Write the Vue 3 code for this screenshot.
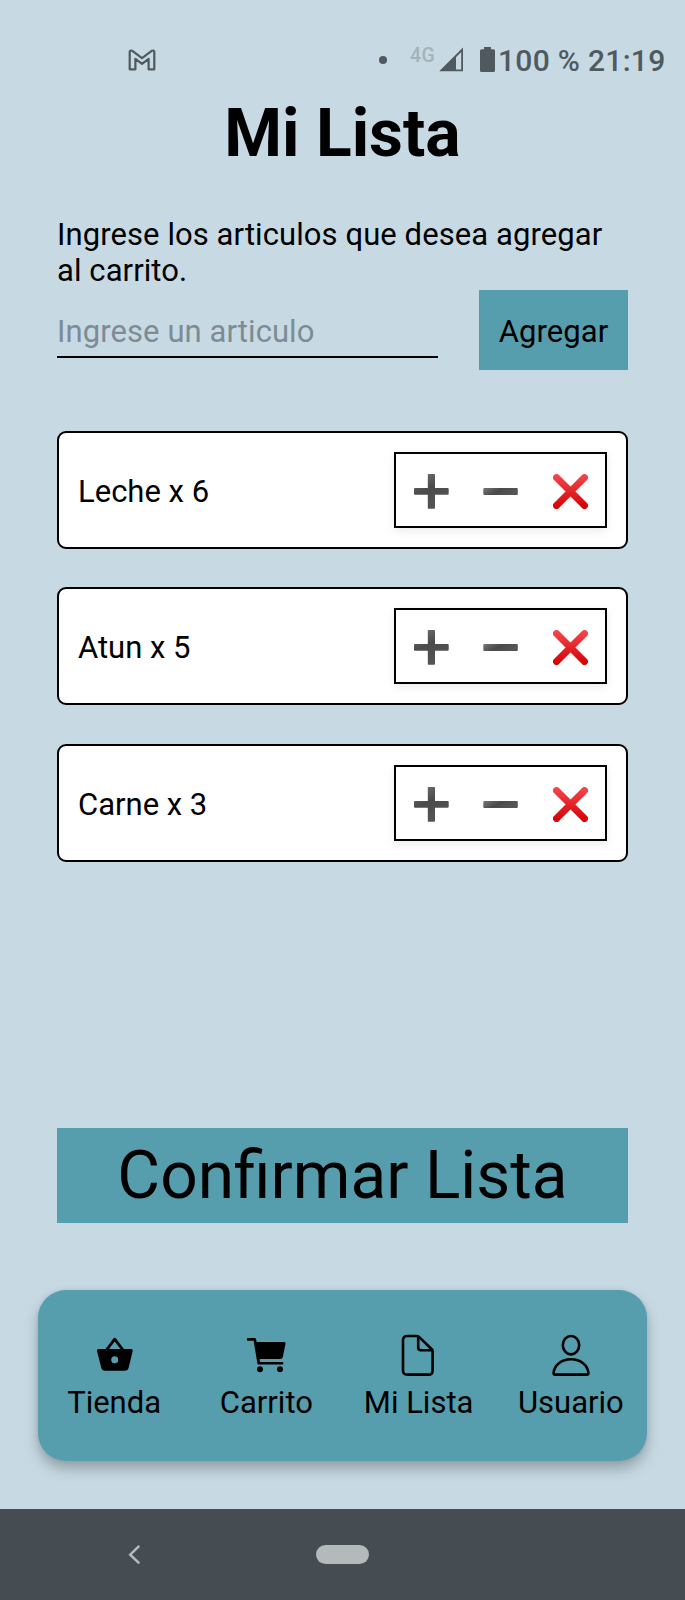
<script setup>
import { reactive, ref } from 'vue'

const draft = ref('')
const items = reactive([
  { name: 'Leche', qty: 6 },
  { name: 'Atun', qty: 5 },
  { name: 'Carne', qty: 3 },
])

function addItem() {
  const name = draft.value.trim()
  if (!name) return
  items.push({ name, qty: 1 })
  draft.value = ''
}

function decrease(item) {
  if (item.qty > 1) item.qty -= 1
}
</script>

<template>
  <div class="screen">
    <svg class="defs" width="0" height="0" aria-hidden="true">
      <defs>
        <linearGradient id="grey-v" x1="0" y1="0" x2="0.5" y2="1">
          <stop offset="0" stop-color="#757575" />
          <stop offset="0.5" stop-color="#4b4b4b" />
          <stop offset="1" stop-color="#555" />
        </linearGradient>
        <linearGradient id="grey-h" x1="0" y1="0" x2="1" y2="0.3">
          <stop offset="0" stop-color="#777" />
          <stop offset="0.5" stop-color="#4a4a4a" />
          <stop offset="1" stop-color="#555" />
        </linearGradient>
        <linearGradient id="red" x1="0" y1="0" x2="0" y2="35" gradientUnits="userSpaceOnUse">
          <stop offset="0" stop-color="#f8474c" />
          <stop offset="0.5" stop-color="#e32428" />
          <stop offset="1" stop-color="#d40000" />
        </linearGradient>
      </defs>
    </svg>

    <header class="status">
      <svg class="gmail" width="28" height="22" viewBox="0 0 28 22">
        <path d="M4 1.7 14 9.2 24 1.7Q26.300 1 26.300 3V20.300H20.600V9.800L14 14.800 7.400 9.800V20.300H1.700V3Q1.700 1 4 1.700Z" />
      </svg>
      <span class="dot"></span>
      <span class="network">4G</span>
      <svg class="signal" width="25" height="25" viewBox="0 0 25 25">
        <path fill-rule="evenodd" d="M24 .5V24.300H.2ZM22.200 5 17 10.200V22.400H22.200Z" />
      </svg>
      <svg class="battery" width="15" height="25" viewBox="0 0 15 25">
        <path d="M4 0H11V2.300H13.500Q15 2.300 15 3.800V23.500Q15 25 13.500 25H1.500Q0 25 0 23.500V3.800Q0 2.300 1.500 2.300H4Z" />
      </svg>
      <span class="clock">100 % 21:19</span>
    </header>

    <main class="content">
      <h1>Mi Lista</h1>
      <p class="hint">Ingrese los articulos que desea agregar al carrito.</p>

      <form class="entry" @submit.prevent="addItem">
        <input v-model="draft" type="text" placeholder="Ingrese un articulo" />
        <button class="add" type="submit">Agregar</button>
      </form>

      <ul class="items">
        <li v-for="(item, i) in items" :key="item.name" class="card">
          <span class="label">{{ item.name }} x {{ item.qty }}</span>
          <div class="actions">
            <button type="button" aria-label="Sumar" @click="item.qty++">
              <svg width="35" height="35" viewBox="0 0 35 35">
                <path fill="url(#grey-v)" d="M14.600 0H20.200Q21 0 21 .8V14H33.700Q34.700 14 34.700 15V19.800Q34.700 20.800 33.700 20.800H21V34Q21 34.800 20.200 34.800H14.600Q13.800 34.800 13.800 34V20.800H1Q0 20.800 0 19.800V15Q0 14 1 14H13.800V.8Q13.800 0 14.600 0Z" />
              </svg>
            </button>
            <button type="button" aria-label="Restar" @click="decrease(item)">
              <svg width="35" height="35" viewBox="0 0 35 35">
                <rect x="0.300" y="14" width="34.500" height="6.900" rx="1" fill="url(#grey-h)" />
              </svg>
            </button>
            <button type="button" aria-label="Quitar" @click="items.splice(i, 1)">
              <svg width="35" height="35" viewBox="0 0 35 35">
                <path d="M3.500 3.500 31.500 31.500M31.500 3.500 3.500 31.500" stroke="url(#red)" stroke-width="6.900" stroke-linecap="round" />
              </svg>
            </button>
          </div>
        </li>
      </ul>

      <button class="confirm" type="button">Confirmar Lista</button>
    </main>

    <nav class="tabs">
      <a class="tab">
        <svg width="44" height="44" viewBox="0 0 44 44">
          <path transform="translate(0.700 0)" fill-rule="evenodd" d="M22 4.800Q22.900 4.800 23.500 5.700L31.300 16H38.500Q40.400 16 40 18L36 34.500Q35.200 37.800 32 37.800H12.500Q9.300 37.800 8.500 34.500L4.300 18Q4 16 5.800 16H12.800L20.500 5.700Q21.100 4.800 22 4.800ZM22 8.400 16.300 16H27.800ZM22 23.300A3.500 3.500 0 1 0 22 30.300 3.500 3.500 0 1 0 22 23.300Z" />
        </svg>
        <span>Tienda</span>
      </a>
      <a class="tab">
        <svg width="44" height="44" viewBox="0 0 44 44">
          <path d="M3.900 5H10.500Q11.800 5 12.100 6.300L12.600 9H40Q41.900 9 41.500 11L38.800 24Q38.400 26 36.500 26H15.600L16 28.900H38.200Q39.400 28.900 39.400 30.200T38.200 31.600H14.500Q13.600 31.600 13.400 30.600L9.600 7.700H3.900Q2.800 7.700 2.800 6.400T3.900 5Z" />
          <circle cx="16" cy="36.300" r="3" />
          <circle cx="36" cy="36.300" r="3" />
        </svg>
        <span>Carrito</span>
      </a>
      <a class="tab">
        <svg class="line" width="44" height="44" viewBox="0 0 44 44">
          <path d="M11 3H19.800Q21.100 3 22 3.900L34.800 16.200Q35.600 17 35.600 18.200V37.400Q35.600 41.600 31.400 41.600H10.200Q6 41.600 6 37.400V7.200Q6 3 10.200 3Z" />
          <path d="M21.200 3.600V14.600Q21.200 17.300 23.900 17.300H35.200" />
        </svg>
        <span>Mi Lista</span>
      </a>
      <a class="tab">
        <svg class="line" width="44" height="44" viewBox="0 0 44 44">
          <ellipse cx="22" cy="12.200" rx="8.200" ry="9.200" />
          <path d="M22 26.300C12.500 26.300 5.200 32 4.600 40Q4.600 41.600 6.100 41.600H37.900Q39.400 41.600 39.400 40C38.800 32 31.500 26.300 22 26.300Z" />
        </svg>
        <span>Usuario</span>
      </a>
    </nav>

    <footer class="system">
      <svg class="back" width="12" height="20" viewBox="0 0 12 20">
        <path d="M10.500 1.700 2.200 9.700 10.500 17.700" />
      </svg>
      <span class="home"></span>
    </footer>
  </div>
</template>

<style>
body {
  margin: 0;
  background: #c7dae4;
}
</style>

<style scoped>
.screen {
  box-sizing: border-box;
  width: 685px;
  height: 1600px;
  display: flex;
  flex-direction: column;
  overflow: hidden;
  background: #c7dae4;
  color: #000;
  font-family: Roboto, sans-serif;
  font-size: 31px;
}

.defs {
  position: absolute;
}

button {
  margin: 0;
  padding: 0;
  border: 0;
  border-radius: 0;
  background: none;
  color: inherit;
  font: inherit;
}

.status {
  flex: none;
  display: flex;
  align-items: flex-start;
  height: 95px;
  box-sizing: border-box;
  padding: 47px 0 0 128px;
  color: #50595e;
  fill: #50595e;
}

.gmail {
  margin-top: 2px;
  fill: none;
  stroke: #50595e;
  stroke-width: 2.200;
  stroke-linejoin: round;
}

.dot {
  width: 8px;
  height: 8px;
  margin: 9px 0 0 223px;
  border-radius: 50%;
  background: #50595e;
}

.network {
  width: 29px;
  margin-left: 23px;
  color: #a3b3bc;
  font-size: 19.500px;
  font-weight: 500;
  line-height: 17px;
  letter-spacing: 0.500px;
}

.battery {
  margin-left: 16px;
}

.clock {
  margin: -4px 0 0 3px;
  font-size: 30px;
  font-weight: 500;
  line-height: 35px;
  letter-spacing: 0.300px;
  white-space: nowrap;
}

.content {
  flex: none;
  display: flex;
  flex-direction: column;
  padding: 0 57px;
}

h1 {
  margin: 0;
  font-size: 66px;
  font-weight: 700;
  line-height: 77px;
  text-align: center;
}

.hint {
  margin: 45px 0 0;
  line-height: 36px;
  letter-spacing: 0.080px;
}

.entry {
  display: flex;
  align-items: flex-start;
  justify-content: space-between;
  margin-top: 1px;
}

input {
  box-sizing: border-box;
  width: 381px;
  height: 68px;
  padding: 16px 0 0;
  border: 0;
  border-bottom: 2px solid #000;
  border-radius: 0;
  outline: 0;
  background: none;
  color: #000;
  font: inherit;
  letter-spacing: 0.080px;
}

input::placeholder {
  color: #7c8b94;
  opacity: 1;
}

.add {
  width: 149px;
  height: 80px;
  padding-top: 3px;
  background: #569dad;
  letter-spacing: 0.070px;
}

.items {
  display: flex;
  flex-direction: column;
  gap: 38.300px;
  height: 636px;
  margin: 61px 0 0;
  padding: 0;
  list-style: none;
}

.card {
  flex: none;
  box-sizing: border-box;
  display: flex;
  align-items: center;
  justify-content: space-between;
  height: 118px;
  padding: 0 19px;
  border: 2px solid #000;
  border-radius: 9px;
  background: #fff;
}

.label {
  padding-top: 3px;
}

.actions {
  box-sizing: border-box;
  display: grid;
  grid-template-columns: repeat(3, 1fr);
  width: 213px;
  height: 76px;
  border: 2px solid #000;
  background: #fff;
  box-shadow: 0 3px 9px rgba(0, 0, 0, 0.08);
}

.actions button {
  display: flex;
  align-items: center;
  justify-content: center;
  padding: 3px 0 0 1px;
}

.confirm {
  height: 95px;
  margin-top: 61px;
  background: #569dad;
  font-size: 65.800px;
}

.tabs {
  flex: none;
  display: grid;
  grid-template-columns: repeat(4, 1fr);
  width: 609px;
  height: 171px;
  margin: 67px 0 0 38px;
  border-radius: 28px;
  background: #569dad;
  box-shadow: 0 8px 14px rgba(0, 0, 0, 0.260), 0 0 4px rgba(0, 0, 0, 0.080);
}

.tab {
  display: flex;
  flex-direction: column;
  align-items: center;
  padding-top: 43px;
  line-height: 36px;
  white-space: nowrap;
}

.tab span {
  margin-top: 8px;
}

.line {
  fill: none;
  stroke: #000;
  stroke-width: 2.600;
  stroke-linejoin: round;
}

.system {
  flex: none;
  display: flex;
  align-items: flex-start;
  box-sizing: border-box;
  height: 92px;
  margin-top: 47.500px;
  padding: 36px 0 0 128px;
  background: #454d53;
}

.back {
  fill: none;
  stroke: #b3bbc2;
  stroke-width: 2.500;
  stroke-linecap: round;
}

.home {
  width: 53px;
  height: 19px;
  margin-left: 176px;
  border-radius: 10px;
  background: #b4b9ba;
}
</style>
